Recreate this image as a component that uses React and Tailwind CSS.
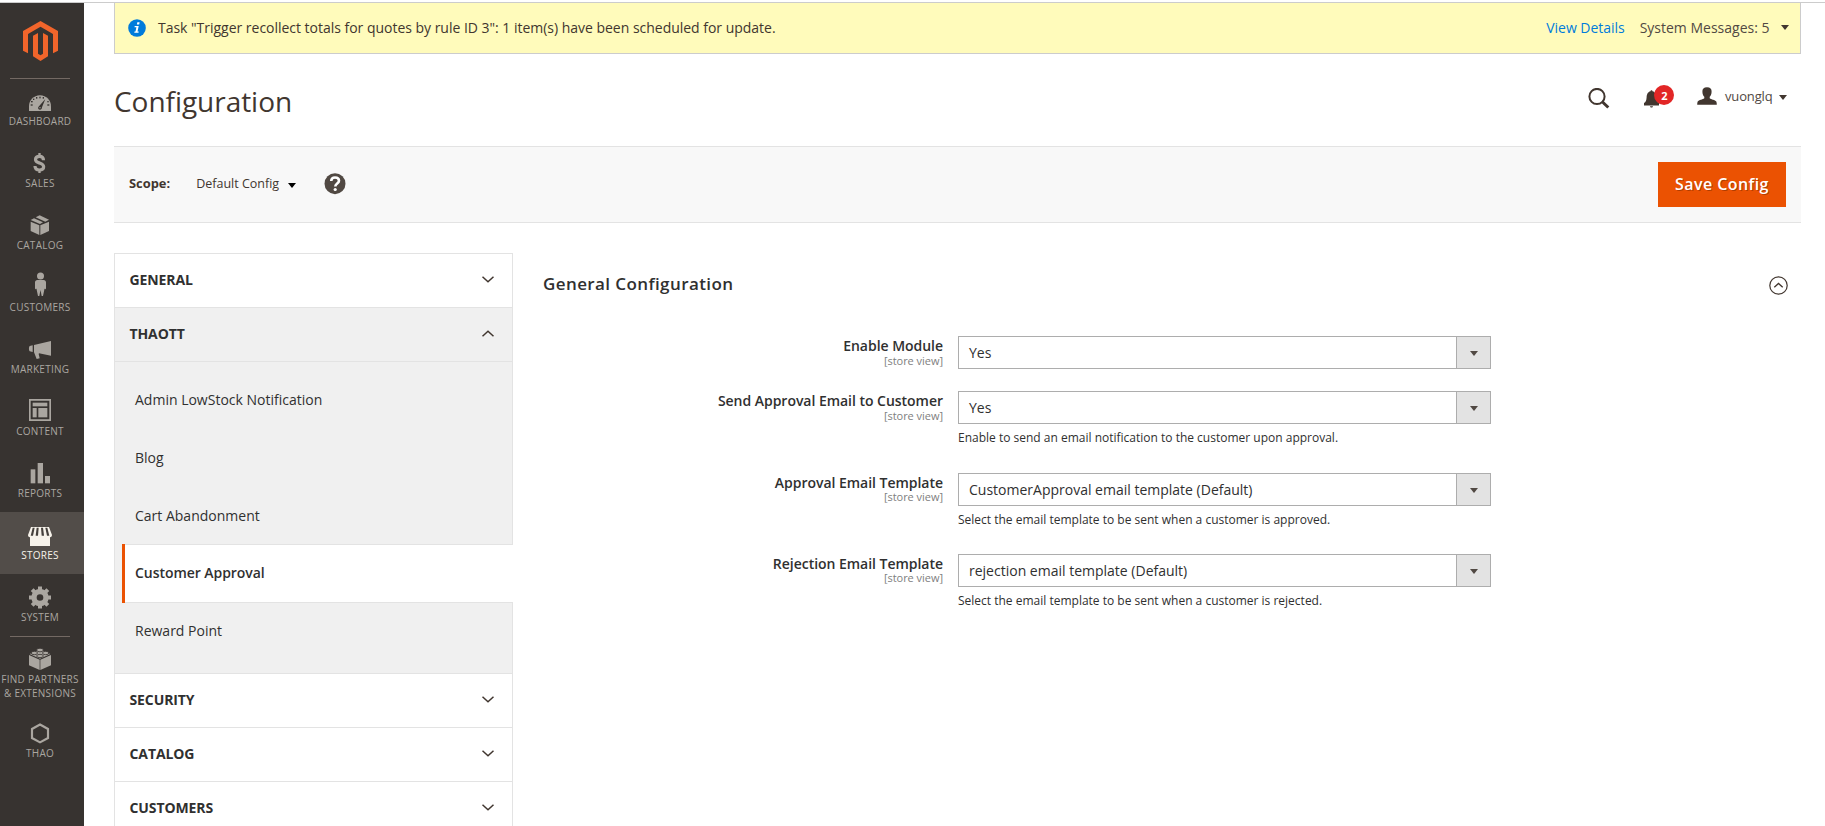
import React from "react";

const LogoIcon = () => (
  <svg width="35" height="40" viewBox="69 62 105 120" fill="#f1652b">
    <path d="M121.500 62 69 92v59l15 8v-58l37.500-21.500L159 101v58l15-8V92z" />
    <path d="M114 98 99 106v62l22.500 14 22.500-14v-62l-15-8v62l-7.500 5-7.500-5z" />
  </svg>
);

const MenuSvg = ({ y, children }) => (
  <svg width="28" height="28" viewBox={`78 ${y} 84 84`} fill="currentColor" className="block shrink-0">
    {children}
  </svg>
);

const DashboardIcon = () => (
  <MenuSvg y={255}>
    <path d="M87 333v-14c0-18 14-33 33-33s33 15 33 33v14z" />
    <g fill="#373330">
      <path d="M115 321c-2 5 1 8 5 8s6-3 6-7l10-25z" />
      <rect x="92" y="313" width="6" height="4" />
      <rect x="142" y="313" width="6" height="4" />
      <rect x="93" y="303" width="5" height="4" />
      <rect x="142" y="303" width="4" height="4" />
      <rect x="99" y="296" width="4" height="4" />
      <rect x="108" y="291" width="4" height="5" />
      <rect x="118" y="290" width="4" height="5" />
      <rect x="128" y="291" width="4" height="5" />
    </g>
    <circle cx="120" cy="323" r="2" />
  </MenuSvg>
);

const SalesIcon = () => (
  <MenuSvg y={441}>
    <path
      d="M130.500 481c0-8-5-12-12-12-7.500 0-12 4-12 9.500 0 7 6 8.500 12 10.500s12.500 5 12.500 11.500c0 6-5 9.500-12.500 9.500-8.500 0-13.500-4-13.500-12"
      fill="none"
      stroke="currentColor"
      strokeWidth="9.500"
    />
    <rect x="115" y="459" width="7" height="9" />
    <rect x="115" y="510" width="7" height="9" />
  </MenuSvg>
);

const CatalogIcon = () => (
  <MenuSvg y={627}>
    <path d="M92 665l26 11v29l-26-12z" />
    <path d="M147 665l-26 11v29l26-12z" />
    <path d="M92 660l10-5 27 12-9 5z" />
    <path d="M107 652l12-6 28 13-11 6z" />
  </MenuSvg>
);

const CustomersIcon = () => (
  <MenuSvg y={48}>
    <circle cx="121.500" cy="63" r="10.500" />
    <path d="M112 75h19c4 0 7 3 7 7v18c0 4-5 4-5 0v4l-4 19h-4l-3.500-18-3.500 18h-4l-4-19v-4c0 4-5 4-5 0V82c0-4 3-7 7-7z" />
  </MenuSvg>
);

const MarketingIcon = () => (
  <MenuSvg y={234}>
    <path d="M102 270l51-12v44l-36-7-1 2 3 13-9 2-8-20z" />
    <path d="M98 271v20l-9-2c-3-3-3-13 0-16z" />
  </MenuSvg>
);

const ContentIcon = () => (
  <MenuSvg y={420}>
    <path fillRule="evenodd" d="M87 432h66v66H87zm5 5v56h56v-56z" />
    <rect x="98" y="443" width="44" height="11" />
    <rect x="98" y="459" width="12" height="28" />
    <rect x="115" y="459" width="27" height="28" />
  </MenuSvg>
);

const ReportsIcon = () => (
  <MenuSvg y={606}>
    <rect x="92" y="643" width="14" height="42" />
    <rect x="113" y="624" width="16" height="61" />
    <rect x="135" y="663" width="15" height="22" />
  </MenuSvg>
);

const StoresIcon = () => (
  <MenuSvg y={27}>
    <path d="M90 80h60v28H90z" />
    <path d="M93 51h54l9 24c0 6-5 7-9 7H93c-4 0-9-1-9-7z" />
    <g fill="#45403c">
      <path d="M98 53h6l-5 24h-7z" />
      <path d="M110 53h6l-2 24h-7z" />
      <path d="M123 53h6l3 24h-7z" />
      <path d="M136 53h6l6 24h-7z" />
    </g>
  </MenuSvg>
);

const SystemIcon = () => (
  <MenuSvg y={213}>
    <circle cx="120" cy="262.500" r="18" fill="none" stroke="currentColor" strokeWidth="16" />
    <g stroke="currentColor" strokeWidth="12">
      <path d="M120 229.500v12M120 283.500v12M87 262.500h12M141 262.500h12M96.500 239l9 9M134.500 277l9 9M143.500 239l-9 9M105.500 277l-9 9" />
    </g>
  </MenuSvg>
);

const PartnersIcon = () => (
  <MenuSvg y={399}>
    <path d="M87 435l32 14v31l-32-14zM153 435l-32 14v31l32-14z" />
    <path d="M89 432l31-13 31 13-31 14z" />
    <g stroke="#373330" strokeWidth="2.500">
      <ellipse cx="120" cy="420" rx="10" ry="5.500" />
      <ellipse cx="103" cy="429" rx="9.500" ry="5" />
      <ellipse cx="137" cy="429" rx="9.500" ry="5" />
      <ellipse cx="120" cy="438" rx="10" ry="5" />
    </g>
  </MenuSvg>
);

const HexIcon = () => (
  <MenuSvg y={621}>
    <path d="M120 643.500l24 13.500v27l-24 13-24-13v-27z" fill="none" stroke="currentColor" strokeWidth="6.500" />
  </MenuSvg>
);

const menu = [
  { label: "DASHBOARD", Icon: DashboardIcon },
  { label: "SALES", Icon: SalesIcon },
  { label: "CATALOG", Icon: CatalogIcon },
  { label: "CUSTOMERS", Icon: CustomersIcon },
  { label: "MARKETING", Icon: MarketingIcon },
  { label: "CONTENT", Icon: ContentIcon },
  { label: "REPORTS", Icon: ReportsIcon },
  { label: "STORES", Icon: StoresIcon, active: true },
  { label: "SYSTEM", Icon: SystemIcon },
  { label: "FIND PARTNERS & EXTENSIONS", Icon: PartnersIcon, divider: true, tall: true },
  { label: "THAO", Icon: HexIcon },
];

function MenuItem({ label, Icon, active, divider, tall }) {
  return (
    <li className={active ? "bg-[#524d49] text-[#f7f3eb]" : "text-[#aaa6a0]"}>
      {divider && <div className="-mb-px ml-[10px] h-px w-[60px] bg-[#736963]" />}
      <a className={`flex w-[80px] flex-col items-center pt-[7px] ${tall ? "h-[74px]" : "h-[62px]"}`}>
        <Icon />
        <span className="mt-px w-[80px] text-center text-[10px] leading-[14px] tracking-[0.25px]">{label}</span>
      </a>
    </li>
  );
}

function Sidebar() {
  return (
    <nav className="h-[823px] w-[84px] shrink-0 bg-[#373330]">
      <div className="flex h-[75px] w-[81px] justify-center pt-[18px]">
        <LogoIcon />
      </div>
      <div className="-mb-px ml-[10px] h-px w-[60px] bg-[#736963]" />
      <ul>
        {menu.map((m) => (
          <MenuItem key={m.label} {...m} />
        ))}
      </ul>
    </nav>
  );
}

const Caret = ({ className }) => (
  <svg width="8" height="5" viewBox="0 0 8 5" fill="currentColor" className={className}>
    <path d="M0 0h8L4 5z" />
  </svg>
);

function Notice() {
  return (
    <div className="flex h-[51px] items-center border border-t-0 border-[#cccccc] bg-[#fffbbb] pl-[14px] pr-[11px] pb-px text-[14px] leading-5 text-[#41362f]">
      <svg width="18" height="18" viewBox="0 0 18 18" className="-ml-px">
        <circle cx="9" cy="9" r="8.800" fill="#007bdb" />
        <path d="M9.300 3.300h2.300l-.4 2.200H8.900zM6.700 7h4l-1.200 5.600h1.200l-.2 1.200H6.300l.2-1.200h1l.9-4.400H6.500z" fill="#fff" />
      </svg>
      <span className="ml-[12px] tracking-[-0.02px]">
        Task "Trigger recollect totals for quotes by rule ID 3": 1 item(s) have been scheduled for update.
      </span>
      <a className="ml-auto tracking-[-0.03px] text-[#007bdb]">View Details</a>
      <span className="ml-[15px] text-[#514943]">System Messages: 5</span>
      <Caret className="ml-[11.500px] text-[#41362f]" />
    </div>
  );
}

function Header() {
  return (
    <header className="flex h-[92px] justify-between">
      <h1 className="pt-[28px] text-[28px] leading-[38px] tracking-[-0.04px] text-[#41362f]">Configuration</h1>
      <div className="flex items-start pr-[14px] pt-[33px] text-[#41362f]">
        <svg width="22" height="21" viewBox="0 0 22 21" className="mt-px" fill="none" stroke="currentColor">
          <circle cx="9" cy="8.500" r="7.600" strokeWidth="2" />
          <path d="M14 13.500l6.300 6" strokeWidth="3" />
        </svg>
        <div className="relative ml-[34px] mt-[3px] h-[18px] w-[15px]">
          <svg width="15" height="18" viewBox="0 0 15 18" fill="currentColor">
            <path d="M6.500 1.300C6.500 0 8.500 0 8.500 1.300 11.500 2.100 12.200 4.500 12.400 7.500c.2 3 .8 4.500 2.600 5.500v2.500H0V13C1.800 12 2.400 10.500 2.600 7.500 2.800 4.500 3.500 2.100 6.500 1.300zM6 16.300h3c0 1.600-3 1.600-3 0z" />
          </svg>
          <span className="absolute -top-[5px] left-[10px] flex h-5 w-5 items-center justify-center rounded-full bg-[#e22626] text-[11px] font-bold leading-none text-white">
            2
          </span>
        </div>
        <svg width="20" height="18" viewBox="0 0 20 18" fill="currentColor" className="ml-[38px]">
          <path d="M10 .3c3.200 0 4.800 1.700 4.600 4.400-.1 2.500-.8 4-1.900 5v1.500c1.500 1.500 5.300 1.300 6.600 3.300.4.900.5 2 .5 3.200H.2c0-1.200.1-2.300.5-3.200 1.300-2 5.100-1.800 6.600-3.300V9.700c-1.100-1-1.800-2.500-1.900-5C5.200 2 6.800.3 10 .3z" />
        </svg>
        <span className="-mt-px ml-[7.500px] text-[13px] leading-[20px] tracking-[-0.15px] text-[#514943]">vuonglq</span>
        <Caret className="ml-[6.500px] mt-[8px]" />
      </div>
    </header>
  );
}

function ScopeBar() {
  return (
    <div className="flex h-[77px] items-center border-y border-[#e3e3e3] bg-[#f8f8f8] pl-[15px] pr-[15px] text-[13px] leading-5 text-[#41362f]">
      <span className="-mt-[3px] text-[12.9px] font-bold">Scope:</span>
      <span className="-mt-[2px] ml-[26px] text-[12.500px]">Default Config</span>
      <Caret className="ml-[8.500px] mt-px text-black" />
      <svg width="22" height="22" viewBox="0 0 22 22" className="-mt-px ml-[28px]">
        <circle cx="11" cy="10.700" r="10.500" fill="#514943" />
        <path d="M7.200 8C7.300 5.700 8.800 4.500 11 4.500c2.400 0 4 1.200 4 3.200 0 2.800-3.700 2.800-3.700 5.800" fill="none" stroke="#fff" strokeWidth="2.600" />
        <circle cx="11.200" cy="16.500" r="1.600" fill="#fff" />
      </svg>
      <button className="ml-auto h-[45px] w-[128px] bg-[#eb5202] pb-[2px] text-[16px] font-semibold leading-6 tracking-[0.42px] text-white [text-shadow:1px_1px_0_rgba(0,0,0,0.25)]">
        Save Config
      </button>
    </div>
  );
}

const Chevron = ({ up }) => (
  <svg width="12" height="7" viewBox="0 0 12 7" fill="none" stroke="#41362f" strokeWidth="1.500" className="-mt-[2px]">
    {up ? <path d="M.500 6.200 6 1.200l5.500 5" /> : <path d="M.500.800 6 5.800l5.500-5" />}
  </svg>
);

function NavTitle({ children, open }) {
  return (
    <div
      className={`flex h-[54px] items-center justify-between border-x border-t border-[#e3e3e3] pl-[14.500px] pr-[18px] text-[14px] font-bold leading-5 text-[#303030] ${open ? "bg-[#f0f0f0]" : "bg-white"}`}
    >
      <span className="-mt-px tracking-[-0.1px]">{children}</span>
      <Chevron up={open} />
    </div>
  );
}

const NavLink = ({ children }) => (
  <li className="flex h-[58px] items-center border-r border-[#e3e3e3] pl-[13px]">{children}</li>
);

function ConfigNav() {
  return (
    <div className="w-[399px] shrink-0 self-start">
      <NavTitle>GENERAL</NavTitle>
      <NavTitle open>THAOTT</NavTitle>
      <ul className="flex h-[312px] flex-col border-l border-t border-[#e3e3e3] bg-[#f0f0f0] pl-[7px] text-[14px] leading-5 text-[#303030]">
        <li className="h-[9px] border-r border-[#e3e3e3]" />
        <NavLink>Admin LowStock Notification</NavLink>
        <NavLink>Blog</NavLink>
        <NavLink>Cart Abandonment</NavLink>
        <li className="-mt-px flex h-[59px] items-center border-l-[3px] border-l-[#eb5202] bg-white font-semibold">
          <span className="flex h-full grow items-center border-y border-[#e3e3e3] pb-[2px] pl-[10px] tracking-[-0.05px]">
            Customer Approval
          </span>
        </li>
        <NavLink>
          <span className="-mt-[2px]">Reward Point</span>
        </NavLink>
        <li className="grow border-r border-[#e3e3e3]" />
      </ul>
      <NavTitle>SECURITY</NavTitle>
      <NavTitle>CATALOG</NavTitle>
      <NavTitle>CUSTOMERS</NavTitle>
    </div>
  );
}

function Field({ label, value, note, height, tight }) {
  return (
    <div className={`flex ${height}`}>
      <div className="w-[400px] shrink-0 text-right">
        <div className="text-[14px] font-semibold leading-5 tracking-[-0.03px] text-[#303030]">{label}</div>
        <div className={`text-[11px] leading-[14px] tracking-[-0.03px] text-[#808080] ${tight ? "-mt-[3px]" : "-mt-[2px]"}`}>
          [store view]
        </div>
      </div>
      <div className="ml-[15px] w-[533px]">
        <div className="flex h-[33px] border border-[#adadad] bg-white">
          <span className="grow pl-[10px] text-[14px] leading-[32px] text-[#303030]">{value}</span>
          <span className="flex w-[34px] items-center justify-center border-l border-[#adadad] bg-[#e3e3e3]">
            <Caret className="mt-[2px] text-[#514943]" />
          </span>
        </div>
        {note && <p className="mt-[5px] text-[12px] leading-[18px] text-[#303030]">{note}</p>}
      </div>
    </div>
  );
}

function ConfigForm() {
  return (
    <section className="ml-[30px] grow">
      <div className="flex items-center justify-between pr-[13px] pt-[19px]">
        <h2 className="text-[17px] font-semibold leading-6 tracking-[0.4px] text-[#303030]">General Configuration</h2>
        <svg width="19" height="19" viewBox="0 0 19 19" fill="none" stroke="#41362f" className="mt-[2px]">
          <circle cx="9.500" cy="9.500" r="8.700" strokeWidth="1.200" />
          <path d="M5.300 11.300 9.500 7.500l4.200 3.800" strokeWidth="1.300" />
        </svg>
      </div>
      <div className="mt-[40px]">
        <Field height="h-[55px]" label="Enable Module" value="Yes" />
        <Field
          height="h-[82px]"
          label="Send Approval Email to Customer"
          value="Yes"
          note="Enable to send an email notification to the customer upon approval."
        />
        <Field
          tight
          height="h-[81px]"
          label="Approval Email Template"
          value="CustomerApproval email template (Default)"
          note="Select the email template to be sent when a customer is approved."
        />
        <Field
          tight
          height="h-[81px]"
          label="Rejection Email Template"
          value="rejection email template (Default)"
          note="Select the email template to be sent when a customer is rejected."
        />
      </div>
    </section>
  );
}

export default function App() {
  return (
    <div className="h-[826px] overflow-hidden bg-white pt-[2px] font-['Open_Sans',sans-serif]">
      <div className="h-px bg-[#cccccc]" />
      <div className="flex">
        <Sidebar />
        <main className="ml-[30px] w-[1687px]">
          <Notice />
          <Header />
          <ScopeBar />
          <div className="mt-[30px] flex">
            <ConfigNav />
            <ConfigForm />
          </div>
        </main>
      </div>
    </div>
  );
}
